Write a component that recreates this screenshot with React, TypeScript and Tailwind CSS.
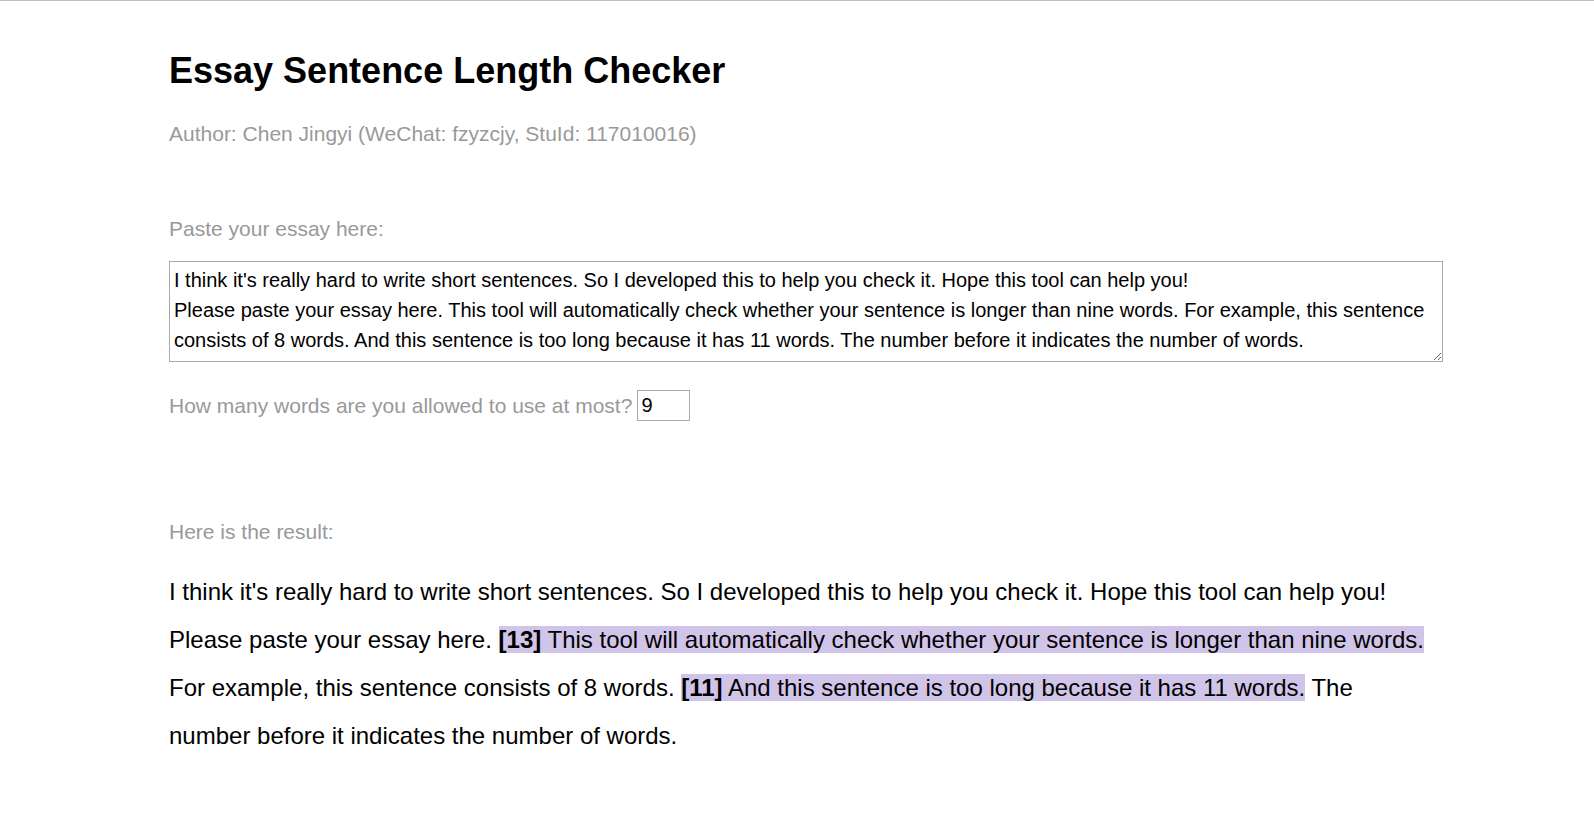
import { useState } from 'react';

const ESSAY =
  "I think it's really hard to write short sentences. So I developed this to help you check it. Hope this tool can help you!\nPlease paste your essay here. This tool will automatically check whether your sentence is longer than nine words. For example, this sentence consists of 8 words. And this sentence is too long because it has 11 words. The number before it indicates the number of words.";

// split text into sentences, keep trailing whitespace
function splitSentences(text: string) {
  const out: string[] = [];
  const re = /[^.!?]+[.!?]*\s*/g;
  let m;
  while ((m = re.exec(text)) !== null) out.push(m[0]);
  return out;
}

function countWords(s: string) {
  return s.trim().split(/\s+/).filter(Boolean).length;
}

export default function App() {
  const [essay, setEssay] = useState(ESSAY);
  const [limit, setLimit] = useState('9');
  const max = parseInt(limit, 10) || 0;

  const paragraphs = essay.split('\n');

  return (
    <div className="min-h-screen bg-white border-t border-[#bdbdbd] font-['Liberation_Sans',Arial,sans-serif] text-black">
      <div className="ml-[169px] w-[1274px]">
        <h1 className="pt-[48px] text-[36px] leading-[44px] font-bold">Essay Sentence Length Checker</h1>
        <p className="mt-[26px] text-[21px] leading-[30px] text-[#999]">
          Author: Chen Jingyi (WeChat: fzyzcjy, StuId: 117010016)
        </p>

        <p className="mt-[65px] text-[21px] leading-[30px] text-[#999]">Paste your essay here:</p>
        <textarea
          value={essay}
          onChange={(e) => setEssay(e.target.value)}
          className="mt-[17px] block w-full h-[101px] border border-[#a9a9a9] px-[4px] py-[3px] text-[20px] leading-[30px] outline-none"
        />

        <div className="mt-[28px] flex items-center h-[31px]">
          <span className="text-[21px] leading-[30px] text-[#999]">How many words are you allowed to use at most?</span>
          <input
            value={limit}
            onChange={(e) => setLimit(e.target.value)}
            className="ml-[5px] w-[53px] h-[31px] border border-[#a9a9a9] px-[3px] text-[20px] outline-none"
          />
        </div>

        <p className="mt-[96px] text-[21px] leading-[30px] text-[#999]">Here is the result:</p>
        <div className="mt-[21px] pr-[12px] text-[24px] leading-[48px]">
          {paragraphs.map((para, pi) => (
            <div key={pi}>
              {splitSentences(para).map((s, si) => {
                const n = countWords(s);
                const body = s.replace(/\s+$/, '');
                const tail = s.slice(body.length);
                if (max > 0 && n > max) {
                  return (
                    <span key={si}>
                      <span className="bg-[#d1c4e9]">
                        <b>[{n}]</b> {body}
                      </span>
                      {tail}
                    </span>
                  );
                }
                return <span key={si}>{s}</span>;
              })}
            </div>
          ))}
        </div>
      </div>
    </div>
  );
}
